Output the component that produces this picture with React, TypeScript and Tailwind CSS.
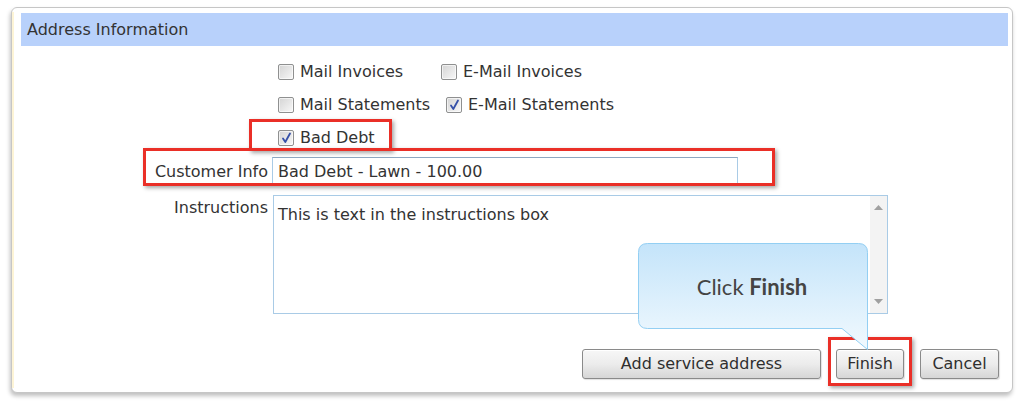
import React from "react";

const font = { fontFamily: '"DejaVu Sans", Verdana, sans-serif' };

function Box({ checked }: { checked?: boolean }) {
  return (
    <span className="relative inline-block w-[16px] h-[16px] shrink-0 border border-[#8f9090] rounded-[2px] bg-linear-to-br from-[#d4d4d4] to-[#f8f8f8] shadow-[inset_0_0_0_1px_rgba(255,255,255,0.6)]">
      {checked && (
        <svg className="absolute left-[2px] top-[1px]" width="11" height="12" viewBox="0 0 11 12">
          <path d="M2 6.5 L4.3 10 L9 1.5" fill="none" stroke="#3550a8" strokeWidth="1.8" strokeLinecap="round" strokeLinejoin="round" />
        </svg>
      )}
    </span>
  );
}

function Check({ label, checked, w }: { label: string; checked?: boolean; w?: string }) {
  return (
    <div className={`flex items-center gap-[6px] ${w ?? ""}`}>
      <Box checked={checked} />
      <span className="text-[16px] text-[#333] leading-none">{label}</span>
    </div>
  );
}

function Btn({ children, w }: { children: React.ReactNode; w: string }) {
  return (
    <div
      className={`${w} h-[30px] flex items-center justify-center rounded-[3px] border border-[#8a8a8a] bg-linear-to-b from-[#f7f7f7] via-[#ececec] to-[#d6d6d6] shadow-[inset_0_1px_0_#ffffff,1px_1px_1px_rgba(0,0,0,0.12)] text-[16px] text-[#2f2f2f]`}
    >
      {children}
    </div>
  );
}

export default function App() {
  return (
    <div className="w-[1024px] h-[405px] bg-white overflow-hidden pt-[7px] pl-[11px]" style={font}>
      <div className="relative w-[1002px] h-[386px] rounded-[6px] border border-[#c6c6c6] bg-white shadow-[-1px_3px_4px_rgba(0,0,0,0.25)]">
        <div className="absolute left-0 top-[4px] bottom-[4px] w-[2px] bg-[#fdf4d6]" />
        {/* header */}
        <div className="mt-[5px] ml-[9px] w-[987px] h-[33px] bg-[#b8d1fb] flex items-center pl-[6px] pt-[1px] text-[16px] text-[#333]">
          Address Information
        </div>

        {/* checkboxes */}
        <div className="mt-[9px] pl-[266px]">
          <div className="h-[33px] flex items-center">
            <Check label="Mail Invoices" w="w-[163px]" />
            <Check label="E-Mail Invoices" />
          </div>
          <div className="h-[33px] flex items-center">
            <Check label="Mail Statements" w="w-[168px]" />
            <Check label="E-Mail Statements" checked />
          </div>
          <div className="h-[33px] flex items-center">
            <Check label="Bad Debt" checked />
          </div>
        </div>

        {/* customer info */}
        <div className="mt-[3px] flex items-center h-[27px]">
          <div className="w-[256px] text-right text-[16px] text-[#333] pt-[2px]">Customer Info</div>
          <div className="ml-[4px] w-[466px] h-[27px] border border-[#a9cbe6] border-t-[#8da7c1] bg-white flex items-center pl-[5px] pt-[2px] text-[16px] text-[#333]">
            Bad Debt - Lawn - 100.00
          </div>
        </div>

        {/* instructions */}
        <div className="mt-[11px] flex items-start">
          <div className="w-[256px] text-right text-[16px] text-[#333] pt-[1px]">Instructions</div>
          <div className="ml-[5px] w-[615px] h-[119px] border border-[#a9cbe6] bg-white flex">
            <div className="flex-1 pl-[4px] pt-[7px] text-[16px] text-[#333]">This is text in the instructions box</div>
            <div className="w-[17px] bg-[#f3f3f3] flex flex-col items-center justify-between py-[9px]">
              <svg width="9" height="5" viewBox="0 0 9 5"><path d="M0 5 L4.5 0 L9 5 Z" fill="#a0a0a0" /></svg>
              <svg width="9" height="5" viewBox="0 0 9 5"><path d="M0 0 L4.5 5 L9 0 Z" fill="#a0a0a0" /></svg>
            </div>
          </div>
        </div>

        {/* buttons */}
        <div className="mt-[35px] flex justify-end pr-[13px]">
          <Btn w="w-[239px]">Add service address</Btn>
          <div className="ml-[15px]">
            <Btn w="w-[68px]">Finish</Btn>
          </div>
          <div className="ml-[16px]">
            <Btn w="w-[79px]">Cancel</Btn>
          </div>
        </div>

        {/* red highlight boxes */}
        <div className="absolute left-[237px] top-[111px] w-[143px] h-[32px] border-[3px] border-[#ea2f27] shadow-[2px_2px_4px_rgba(0,0,0,0.35)]" />
        <div className="absolute left-[131px] top-[140px] w-[632px] h-[38px] border-[3px] border-[#ea2f27] shadow-[2px_2px_4px_rgba(0,0,0,0.35)]" />
        <div className="absolute left-[816px] top-[329px] w-[84px] h-[49px] border-[3px] border-[#ea2f27] shadow-[2px_2px_4px_rgba(0,0,0,0.35)]" />

        {/* callout */}
        <div className="absolute left-[626px] top-[235px] w-[232px] h-[110px]">
          <svg className="absolute left-0 top-0" width="232" height="110" viewBox="0 0 232 110">
            <defs>
              <linearGradient id="cg" x1="0" y1="0" x2="0" y2="1">
                <stop offset="0" stopColor="#c4e4fa" />
                <stop offset="1" stopColor="#f1f9fe" />
              </linearGradient>
            </defs>
            <path
              d="M9.5 0.5 H220.5 Q229.5 0.5 229.5 9.5 V106.5 L204 85.5 H9.5 Q0.5 85.5 0.5 76.5 V9.5 Q0.5 0.5 9.5 0.5 Z"
              fill="url(#cg)"
              stroke="#93cff3"
              strokeWidth="1"
            />
          </svg>
          <div
            className="absolute left-0 top-0 w-[230px] h-[86px] flex items-center justify-center pr-[2px] text-[22px] text-[#444]"
            style={{ fontFamily: 'Lato, "Open Sans", sans-serif' }}
          >
            Click&nbsp;<span className="font-bold">Finish</span>
          </div>
        </div>
      </div>
    </div>
  );
}
